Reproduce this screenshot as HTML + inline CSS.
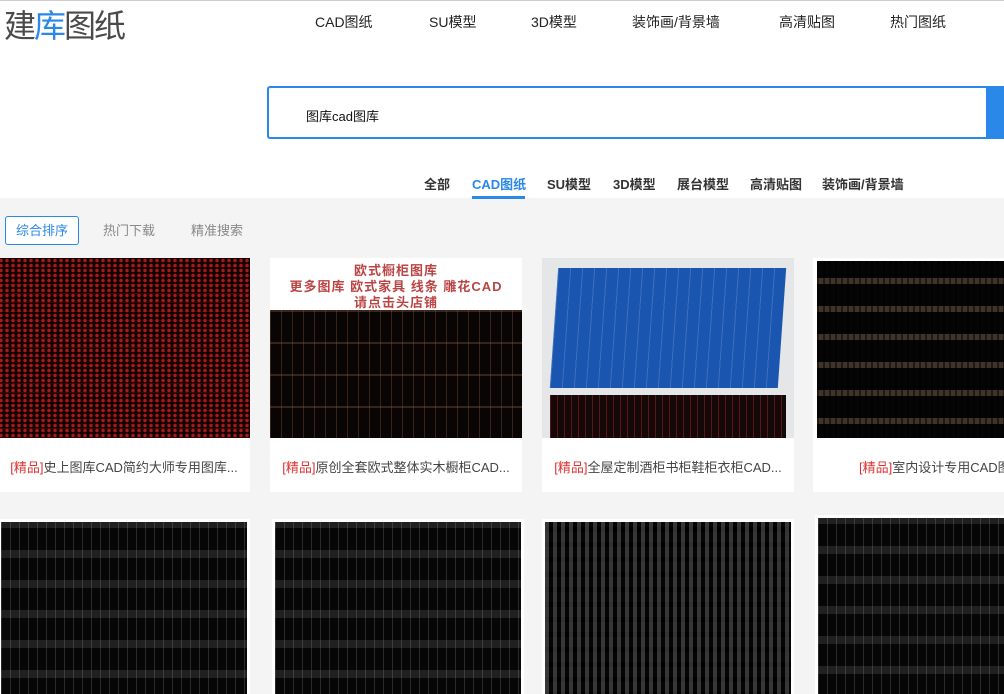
<!DOCTYPE html>
<html><head><meta charset="utf-8"><style>
*{margin:0;padding:0;box-sizing:border-box}
html,body{width:1004px;height:694px;overflow:hidden}
body{background:#f4f4f4;font-family:"Liberation Sans","Noto Sans CJK SC",sans-serif;position:relative}
.hdr{position:absolute;left:0;top:0;width:1004px;height:57px;background:#fff;border-top:1px solid #ccc;box-shadow:0 2px 3px #ddd}
.logo{position:absolute;left:4px;top:0px;font-size:32px;color:#4a4a4a;letter-spacing:-2px}
.logo b{color:#2a88e8;font-weight:normal}
.nav{position:absolute;top:11px;font-size:14px;color:#222}
.top{position:absolute;left:0;top:57px;width:1004px;height:141px;background:#fff}
.search{position:absolute;left:267px;top:86px;width:722px;height:53px;border:2px solid #2a88e8;border-right:none;border-radius:3px 0 0 3px;background:#fff}
.search span{position:absolute;left:37px;top:18px;font-size:13px;color:#111}
.btn{position:absolute;left:986px;top:86px;width:18px;height:53px;background:#2a88e8}
.tab{position:absolute;top:174px;font-size:13px;font-weight:bold;color:#333}
.ul{position:absolute;left:472px;top:196px;width:53px;height:3px;background:#2a88e8}
.sort{position:absolute;top:220px;font-size:13px;color:#888}
.sbox{position:absolute;left:5px;top:216px;width:74px;height:29px;border:1px solid #2a88e8;border-radius:3px;background:#fff}
.card{position:absolute;width:252px;background:#fff}
.img{position:absolute;left:0;top:0;width:252px;height:180px;background:#050505}
.cap{position:absolute;top:199px;left:0;width:252px;text-align:center;font-size:13px;color:#444;white-space:nowrap}
.cap i{font-style:normal;color:#d33}
.red{background:
radial-gradient(circle,rgba(190,30,30,.85) 0 1.5px,transparent 2px) 0 0/6px 5px,
repeating-linear-gradient(0deg,rgba(90,10,10,.5) 0 1px,transparent 1px 9px),#120202}
.lines{background:
repeating-linear-gradient(90deg,rgba(170,170,170,.22) 0 1px,transparent 1px 9px),
repeating-linear-gradient(0deg,transparent 0 14px,rgba(150,150,150,.18) 14px 22px,transparent 22px 30px),#060606}
</style></head><body>
<div class="hdr">
<div class="logo">建<b>库</b>图纸</div>
<div class="nav" style="left:315px">CAD图纸</div>
<div class="nav" style="left:429px">SU模型</div>
<div class="nav" style="left:531px">3D模型</div>
<div class="nav" style="left:632px">装饰画/背景墙</div>
<div class="nav" style="left:779px">高清贴图</div>
<div class="nav" style="left:890px">热门图纸</div>
</div>
<div class="top"></div>
<div class="search"><span>图库cad图库</span></div>
<div class="btn"></div>
<div class="tab" style="left:424px">全部</div>
<div class="tab" style="left:472px;color:#2a88e8">CAD图纸</div>
<div class="tab" style="left:547px">SU模型</div>
<div class="tab" style="left:613px">3D模型</div>
<div class="tab" style="left:677px">展台模型</div>
<div class="tab" style="left:750px">高清贴图</div>
<div class="tab" style="left:822px">装饰画/背景墙</div>
<div class="ul"></div>
<div class="sbox"></div>
<div class="sort" style="left:16px;color:#2a88e8">综合排序</div>
<div class="sort" style="left:103px">热门下载</div>
<div class="sort" style="left:191px">精准搜索</div>

<div class="card" style="left:-2px;top:258px;height:234px"><div class="img red"></div><div class="cap"><i>[精品]</i>史上图库CAD简约大师专用图库...</div></div>
<div class="card" style="left:270px;top:258px;height:234px"><div class="img" style="background:#080505">
<div style="position:absolute;left:0;top:0;width:252px;height:52px;background:#fff;color:#b44;font-size:13px;font-weight:bold;text-align:center;line-height:16px;padding-top:5px;letter-spacing:1px">欧式橱柜图库<br>更多图库 欧式家具 线条 雕花CAD<br>请点击头店铺</div>
<div style="position:absolute;left:0;top:52px;width:252px;height:128px;background:repeating-linear-gradient(90deg,rgba(140,90,60,.35) 0 1px,transparent 1px 11px),repeating-linear-gradient(0deg,transparent 0 30px,rgba(160,110,80,.3) 30px 32px),#0a0505"></div></div>
<div class="cap"><i>[精品]</i>原创全套欧式整体实木橱柜CAD...</div></div>
<div class="card" style="left:542px;top:258px;height:234px"><div class="img" style="background:#e4e6e8">
<div style="position:absolute;left:12px;top:10px;width:228px;height:120px;background:repeating-linear-gradient(90deg,rgba(255,255,255,.15) 0 1px,transparent 1px 12px),#1a56b0;transform:skewX(-4deg)"></div>
<div style="position:absolute;left:8px;top:137px;width:236px;height:43px;background:repeating-linear-gradient(90deg,rgba(180,40,40,.45) 0 1px,transparent 1px 7px),#150808"></div></div>
<div class="cap"><i>[精品]</i>全屋定制酒柜书柜鞋柜衣柜CAD...</div></div>
<div class="card" style="left:813px;top:258px;height:234px"><div class="img" style="left:4px;width:248px;top:3px;height:177px;background:repeating-linear-gradient(90deg,rgba(0,0,0,.5) 0 2px,transparent 2px 6px),repeating-linear-gradient(0deg,transparent 0 14px,rgba(200,160,120,.3) 14px 20px,transparent 20px 28px),#050505"></div><div class="cap" style="left:46px;text-align:left"><i>[精品]</i>室内设计专用CAD图库</div></div>

<div class="card" style="left:-2px;top:519px;height:200px"><div class="img lines" style="left:3px;top:3px;width:246px;height:200px"></div></div>
<div class="card" style="left:272px;top:519px;height:200px"><div class="img lines" style="left:3px;top:3px;width:246px;height:200px"></div></div>
<div class="card" style="left:542px;top:519px;height:200px"><div class="img" style="left:3px;top:3px;width:246px;height:200px;background:repeating-linear-gradient(90deg,rgba(170,170,180,.3) 0 4px,transparent 4px 8px),repeating-linear-gradient(0deg,transparent 0 10px,#000 10px 15px),#050505"></div></div>
<div class="card" style="left:815px;top:515px;height:200px"><div class="img lines" style="left:3px;top:3px;width:246px;height:200px"></div></div>
</body></html>
